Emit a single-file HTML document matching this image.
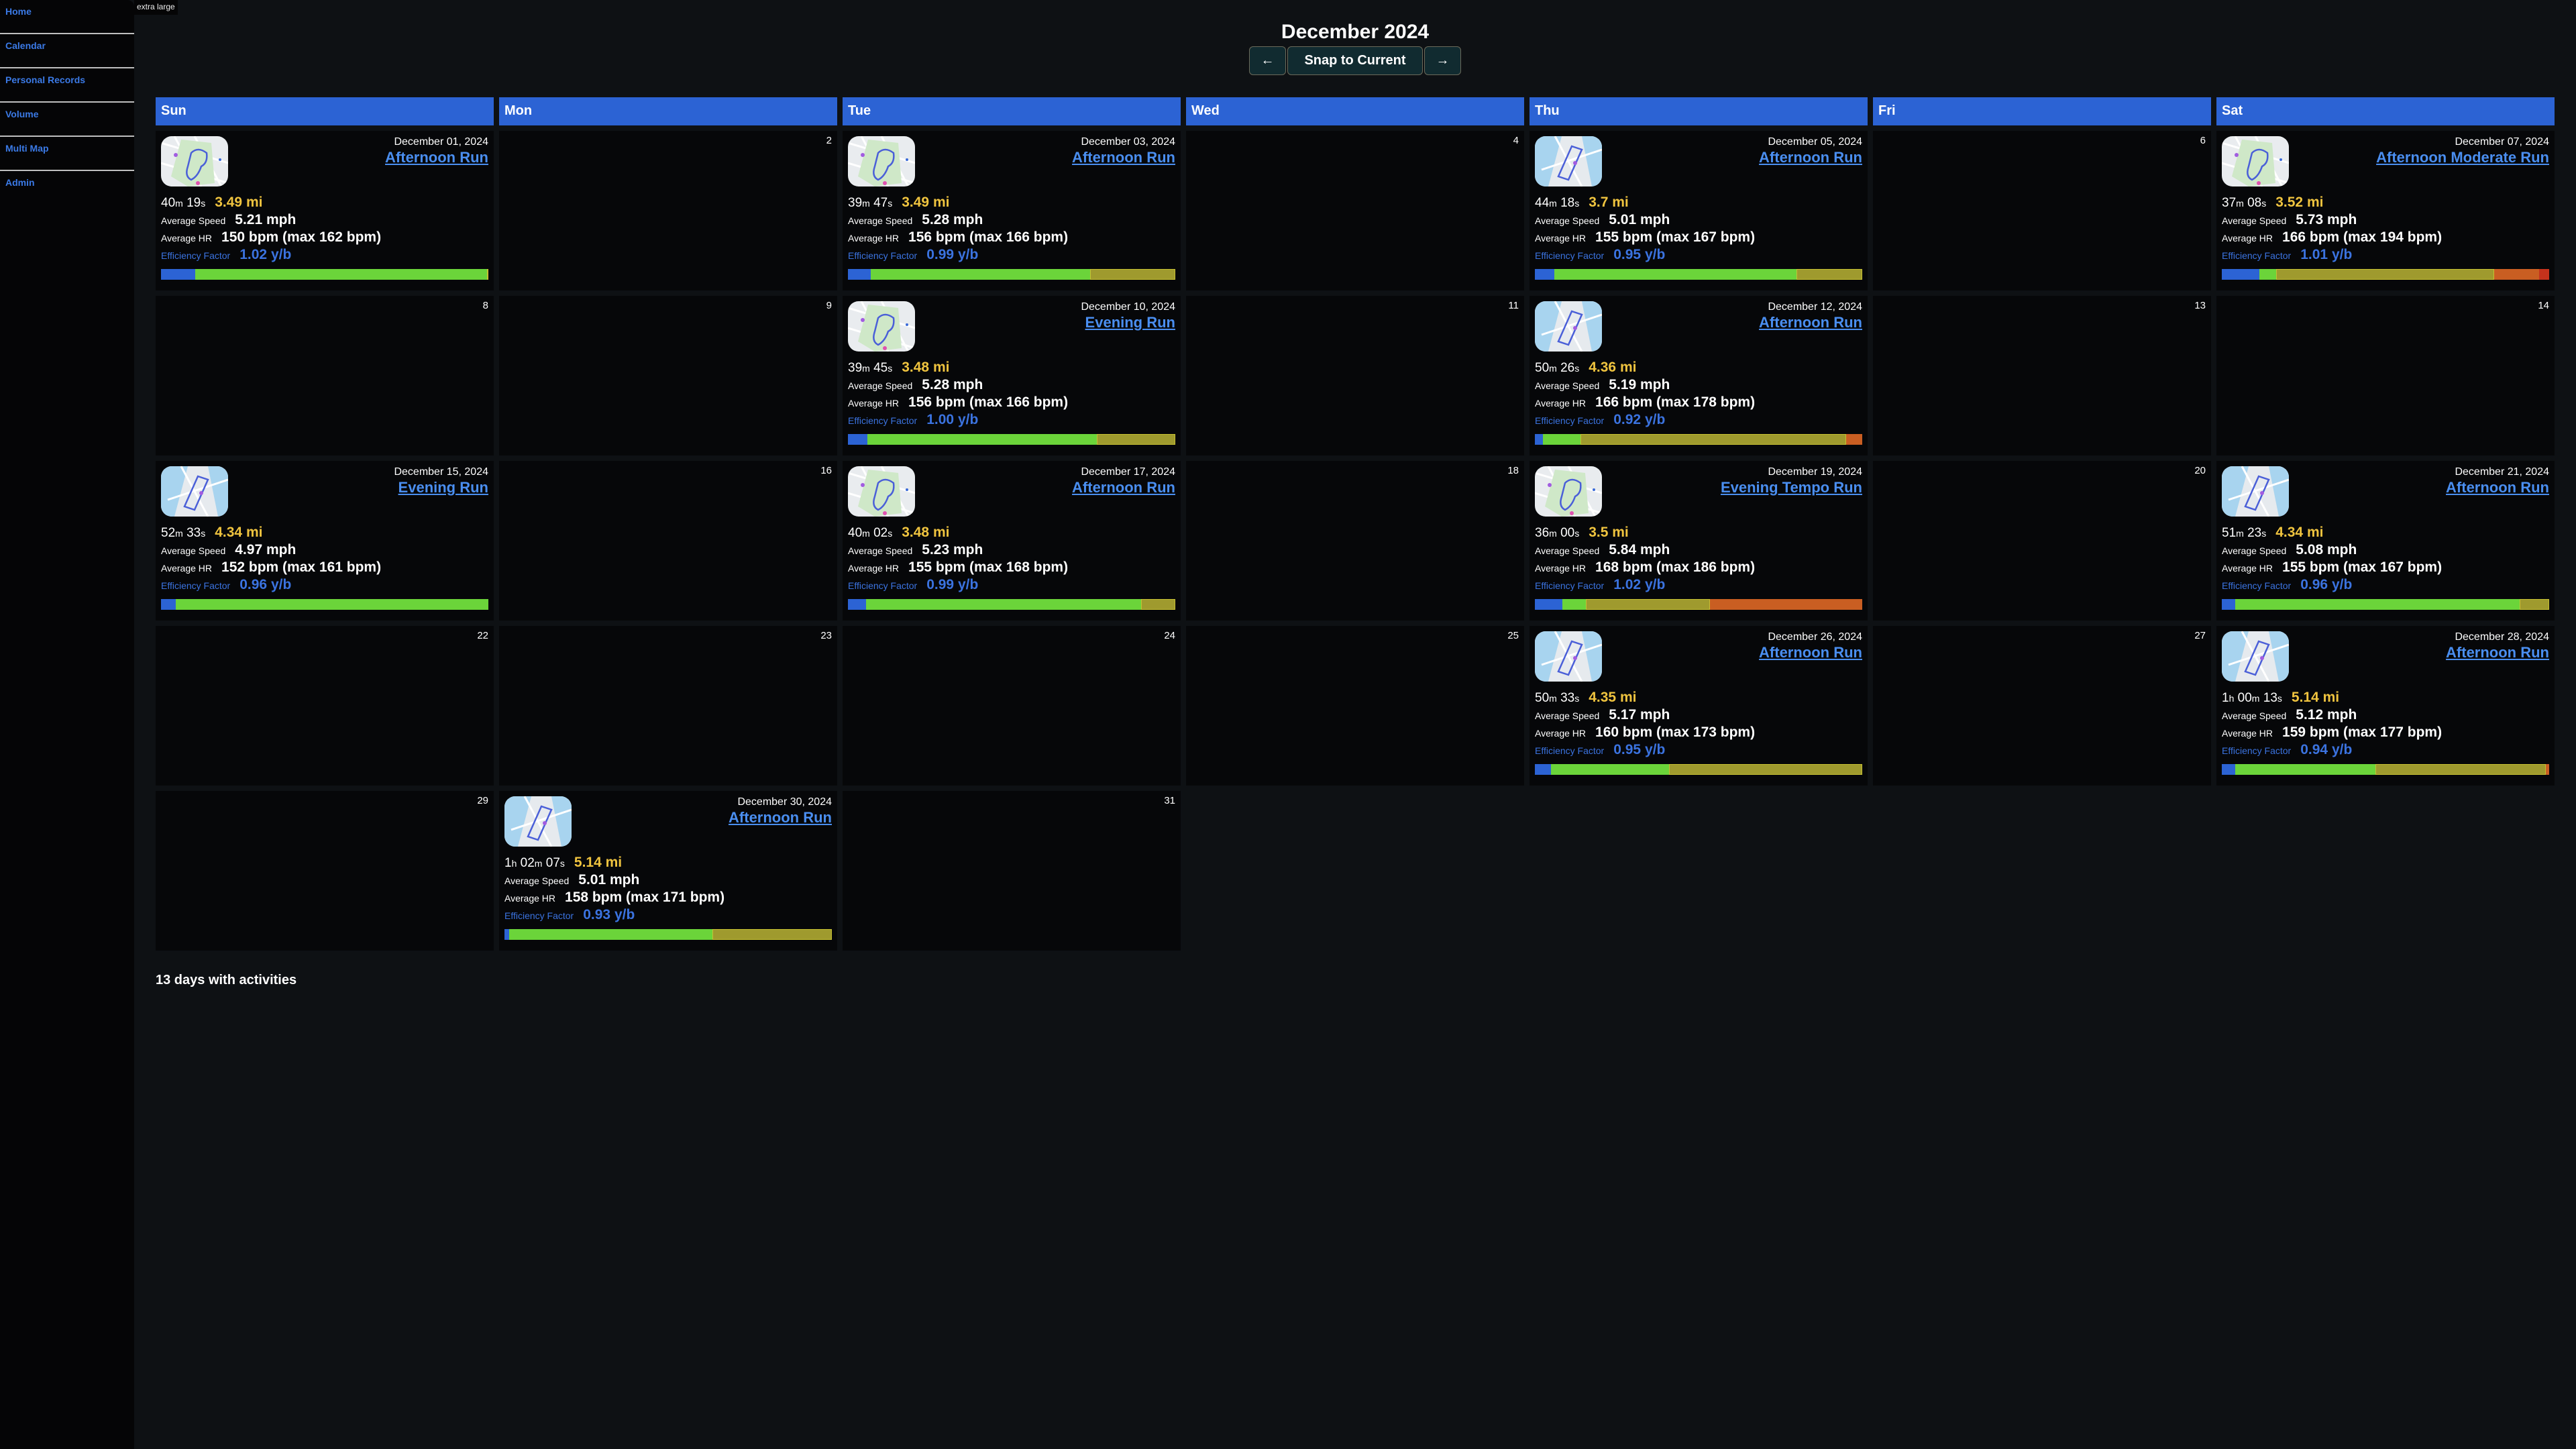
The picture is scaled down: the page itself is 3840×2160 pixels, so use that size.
<!DOCTYPE html>
<html><head><meta charset="utf-8"><style>
*{margin:0;padding:0;box-sizing:border-box}
body{width:3840px;height:2160px;background:#0e1114;font-family:"Liberation Sans",sans-serif;color:#fff;position:relative;overflow:hidden}
.sb{position:absolute;left:0;top:0;width:200px;height:2160px;background:#050506;border-top-right-radius:10px}
.sb div{height:51px;border-bottom:2px solid #bfbfbf;color:#3b7ae6;font-weight:bold;font-size:14px;padding:9px 0 0 8px}
.sb div:last-child{border:none}
.xl{position:absolute;left:200px;top:0;height:22px;padding:3px 4px;background:#050506;font-size:12px;color:#eee}
h1{position:absolute;left:200px;width:3640px;top:30px;text-align:center;font-size:30px;line-height:36px}
.btns{position:absolute;top:69px;left:1862px;display:flex;gap:2px}
.btns div{height:43px;background:#112b30;border:1px solid #6b6a5a;border-radius:6px;font-size:20px;font-weight:bold;line-height:41px;text-align:center}
.h{position:absolute;top:145px;width:504px;height:42px;background:#2c63d4;font-weight:bold;font-size:20px;padding:9px 8px}
.c{position:absolute;width:504px;height:238px;background:#060709}
.n{position:absolute;right:8px;top:6px;font-size:15px}
.m{position:absolute;left:8px;top:8px;width:100px;height:75px;border-radius:16px;overflow:hidden}
.d{position:absolute;right:8px;top:8px;font-size:16px}
.t{position:absolute;right:8px;top:27px;font-size:22px;font-weight:bold;color:#4a8ef0;text-decoration:underline}
.s{position:absolute;left:8px;top:94px;font-size:14px;white-space:nowrap}
.s div{height:26px;line-height:26px}
.s b{font-size:21px;margin-left:14px}
.l1{font-size:19px}.l1 small{font-size:14px}
.mi{color:#f0c43f}
.ef{color:#3b73e0}
.bar{position:absolute;left:8px;right:8px;top:206px;height:16px;display:flex}
.bar i{display:block;height:16px}
.B{background:#2c63d4}.G{background:#6bd43a}.O{background:#9f9a2e;box-shadow:inset 0 0 0 1px #c6c032}.R{background:#c95e22}.X{background:#c5321c}
.foot{position:absolute;left:232px;top:1450px;font-size:20px;font-weight:bold}
</style></head><body>
<svg width="0" height="0" style="position:absolute">
<symbol id="p" viewBox="0 0 100 75"><rect width="100" height="75" fill="#e9ecef"/><path d="M0 10L100 40M0 40L100 70M20 0L60 75M50 0L90 75" stroke="#fff" stroke-width="3"/><polygon points="30,5 75,10 80,70 40,75 15,60" fill="#cfe8c8"/><path d="M45 25 Q55 15 68 25 Q70 40 60 45 Q55 60 45 65 Q35 60 40 45 Z" fill="none" stroke="#4a5fd8" stroke-width="2.5"/><circle cx="22" cy="28" r="3" fill="#a25ce0"/><circle cx="55" cy="70" r="3" fill="#e052b0"/><circle cx="88" cy="35" r="2" fill="#3a6ad8"/></symbol>
<symbol id="w" viewBox="0 0 100 75"><rect width="100" height="75" fill="#e6eaee"/><path d="M0 0L40 0L20 75L0 75Z" fill="#a8d4ef"/><path d="M70 0L100 0L100 75L85 75Z" fill="#a8d4ef"/><path d="M10 50L100 20M30 0L70 75" stroke="#fff" stroke-width="3"/><path d="M35 60L55 15L70 20L50 65Z" fill="none" stroke="#4a5fd8" stroke-width="2.5"/><circle cx="60" cy="40" r="3" fill="#a25ce0"/></symbol>
</svg>
<div class="sb"><div>Home</div><div>Calendar</div><div>Personal Records</div><div>Volume</div><div>Multi Map</div><div>Admin</div></div>
<div class="xl">extra large</div>
<h1>December 2024</h1>
<div class="btns"><div style="width:55px">←</div><div style="width:202px">Snap to Current</div><div style="width:55px">→</div></div>
<div class="h" style="left:232px">Sun</div><div class="h" style="left:744px">Mon</div><div class="h" style="left:1256px">Tue</div><div class="h" style="left:1768px">Wed</div><div class="h" style="left:2280px">Thu</div><div class="h" style="left:2792px">Fri</div><div class="h" style="left:3304px">Sat</div>

<div class="c" style="left:232px;top:195px"><svg class="m"><use href="#p"/></svg><div class="d">December 01, 2024</div><a class="t">Afternoon Run</a><div class="s"><div class="l1">40<small>m</small> 19<small>s</small><b class="mi">3.49 mi</b></div><div>Average Speed<b>5.21 mph</b></div><div>Average HR<b>150 bpm (max 162 bpm)</b></div><div class="ef">Efficiency Factor<b>1.02 y/b</b></div></div><div class="bar"><i class="B" style="width:10.5%"></i><i class="G" style="width:89%"></i><i class="O" style="width:.5%"></i></div></div>
<div class="c" style="left:744px;top:195px"><div class="n">2</div></div>
<div class="c" style="left:1256px;top:195px"><svg class="m"><use href="#p"/></svg><div class="d">December 03, 2024</div><a class="t">Afternoon Run</a><div class="s"><div class="l1">39<small>m</small> 47<small>s</small><b class="mi">3.49 mi</b></div><div>Average Speed<b>5.28 mph</b></div><div>Average HR<b>156 bpm (max 166 bpm)</b></div><div class="ef">Efficiency Factor<b>0.99 y/b</b></div></div><div class="bar"><i class="B" style="width:7%"></i><i class="G" style="width:67%"></i><i class="O" style="width:26%"></i></div></div>
<div class="c" style="left:1768px;top:195px"><div class="n">4</div></div>
<div class="c" style="left:2280px;top:195px"><svg class="m"><use href="#w"/></svg><div class="d">December 05, 2024</div><a class="t">Afternoon Run</a><div class="s"><div class="l1">44<small>m</small> 18<small>s</small><b class="mi">3.7 mi</b></div><div>Average Speed<b>5.01 mph</b></div><div>Average HR<b>155 bpm (max 167 bpm)</b></div><div class="ef">Efficiency Factor<b>0.95 y/b</b></div></div><div class="bar"><i class="B" style="width:6%"></i><i class="G" style="width:74%"></i><i class="O" style="width:20%"></i></div></div>
<div class="c" style="left:2792px;top:195px"><div class="n">6</div></div>
<div class="c" style="left:3304px;top:195px"><svg class="m"><use href="#p"/></svg><div class="d">December 07, 2024</div><a class="t">Afternoon Moderate Run</a><div class="s"><div class="l1">37<small>m</small> 08<small>s</small><b class="mi">3.52 mi</b></div><div>Average Speed<b>5.73 mph</b></div><div>Average HR<b>166 bpm (max 194 bpm)</b></div><div class="ef">Efficiency Factor<b>1.01 y/b</b></div></div><div class="bar"><i class="B" style="width:11.4%"></i><i class="G" style="width:5.3%"></i><i class="O" style="width:66.5%"></i><i class="R" style="width:13.8%"></i><i class="X" style="width:3%"></i></div></div>

<div class="c" style="left:232px;top:441px"><div class="n">8</div></div>
<div class="c" style="left:744px;top:441px"><div class="n">9</div></div>
<div class="c" style="left:1256px;top:441px"><svg class="m"><use href="#p"/></svg><div class="d">December 10, 2024</div><a class="t">Evening Run</a><div class="s"><div class="l1">39<small>m</small> 45<small>s</small><b class="mi">3.48 mi</b></div><div>Average Speed<b>5.28 mph</b></div><div>Average HR<b>156 bpm (max 166 bpm)</b></div><div class="ef">Efficiency Factor<b>1.00 y/b</b></div></div><div class="bar"><i class="B" style="width:6%"></i><i class="G" style="width:70%"></i><i class="O" style="width:24%"></i></div></div>
<div class="c" style="left:1768px;top:441px"><div class="n">11</div></div>
<div class="c" style="left:2280px;top:441px"><svg class="m"><use href="#w"/></svg><div class="d">December 12, 2024</div><a class="t">Afternoon Run</a><div class="s"><div class="l1">50<small>m</small> 26<small>s</small><b class="mi">4.36 mi</b></div><div>Average Speed<b>5.19 mph</b></div><div>Average HR<b>166 bpm (max 178 bpm)</b></div><div class="ef">Efficiency Factor<b>0.92 y/b</b></div></div><div class="bar"><i class="B" style="width:2.5%"></i><i class="G" style="width:11.5%"></i><i class="O" style="width:81%"></i><i class="R" style="width:5%"></i></div></div>
<div class="c" style="left:2792px;top:441px"><div class="n">13</div></div>
<div class="c" style="left:3304px;top:441px"><div class="n">14</div></div>

<div class="c" style="left:232px;top:687px"><svg class="m"><use href="#w"/></svg><div class="d">December 15, 2024</div><a class="t">Evening Run</a><div class="s"><div class="l1">52<small>m</small> 33<small>s</small><b class="mi">4.34 mi</b></div><div>Average Speed<b>4.97 mph</b></div><div>Average HR<b>152 bpm (max 161 bpm)</b></div><div class="ef">Efficiency Factor<b>0.96 y/b</b></div></div><div class="bar"><i class="B" style="width:4.5%"></i><i class="G" style="width:95.5%"></i></div></div>
<div class="c" style="left:744px;top:687px"><div class="n">16</div></div>
<div class="c" style="left:1256px;top:687px"><svg class="m"><use href="#p"/></svg><div class="d">December 17, 2024</div><a class="t">Afternoon Run</a><div class="s"><div class="l1">40<small>m</small> 02<small>s</small><b class="mi">3.48 mi</b></div><div>Average Speed<b>5.23 mph</b></div><div>Average HR<b>155 bpm (max 168 bpm)</b></div><div class="ef">Efficiency Factor<b>0.99 y/b</b></div></div><div class="bar"><i class="B" style="width:5.5%"></i><i class="G" style="width:84%"></i><i class="O" style="width:10.5%"></i></div></div>
<div class="c" style="left:1768px;top:687px"><div class="n">18</div></div>
<div class="c" style="left:2280px;top:687px"><svg class="m"><use href="#p"/></svg><div class="d">December 19, 2024</div><a class="t">Evening Tempo Run</a><div class="s"><div class="l1">36<small>m</small> 00<small>s</small><b class="mi">3.5 mi</b></div><div>Average Speed<b>5.84 mph</b></div><div>Average HR<b>168 bpm (max 186 bpm)</b></div><div class="ef">Efficiency Factor<b>1.02 y/b</b></div></div><div class="bar"><i class="B" style="width:8.5%"></i><i class="G" style="width:7.1%"></i><i class="O" style="width:37.8%"></i><i class="R" style="width:46.6%"></i></div></div>
<div class="c" style="left:2792px;top:687px"><div class="n">20</div></div>
<div class="c" style="left:3304px;top:687px"><svg class="m"><use href="#w"/></svg><div class="d">December 21, 2024</div><a class="t">Afternoon Run</a><div class="s"><div class="l1">51<small>m</small> 23<small>s</small><b class="mi">4.34 mi</b></div><div>Average Speed<b>5.08 mph</b></div><div>Average HR<b>155 bpm (max 167 bpm)</b></div><div class="ef">Efficiency Factor<b>0.96 y/b</b></div></div><div class="bar"><i class="B" style="width:4%"></i><i class="G" style="width:87%"></i><i class="O" style="width:9%"></i></div></div>

<div class="c" style="left:232px;top:933px"><div class="n">22</div></div>
<div class="c" style="left:744px;top:933px"><div class="n">23</div></div>
<div class="c" style="left:1256px;top:933px"><div class="n">24</div></div>
<div class="c" style="left:1768px;top:933px"><div class="n">25</div></div>
<div class="c" style="left:2280px;top:933px"><svg class="m"><use href="#w"/></svg><div class="d">December 26, 2024</div><a class="t">Afternoon Run</a><div class="s"><div class="l1">50<small>m</small> 33<small>s</small><b class="mi">4.35 mi</b></div><div>Average Speed<b>5.17 mph</b></div><div>Average HR<b>160 bpm (max 173 bpm)</b></div><div class="ef">Efficiency Factor<b>0.95 y/b</b></div></div><div class="bar"><i class="B" style="width:5%"></i><i class="G" style="width:36%"></i><i class="O" style="width:59%"></i></div></div>
<div class="c" style="left:2792px;top:933px"><div class="n">27</div></div>
<div class="c" style="left:3304px;top:933px"><svg class="m"><use href="#w"/></svg><div class="d">December 28, 2024</div><a class="t">Afternoon Run</a><div class="s"><div class="l1">1<small>h</small> 00<small>m</small> 13<small>s</small><b class="mi">5.14 mi</b></div><div>Average Speed<b>5.12 mph</b></div><div>Average HR<b>159 bpm (max 177 bpm)</b></div><div class="ef">Efficiency Factor<b>0.94 y/b</b></div></div><div class="bar"><i class="B" style="width:4%"></i><i class="G" style="width:43%"></i><i class="O" style="width:52%"></i><i class="R" style="width:1%"></i></div></div>

<div class="c" style="left:232px;top:1179px"><div class="n">29</div></div>
<div class="c" style="left:744px;top:1179px"><svg class="m"><use href="#w"/></svg><div class="d">December 30, 2024</div><a class="t">Afternoon Run</a><div class="s"><div class="l1">1<small>h</small> 02<small>m</small> 07<small>s</small><b class="mi">5.14 mi</b></div><div>Average Speed<b>5.01 mph</b></div><div>Average HR<b>158 bpm (max 171 bpm)</b></div><div class="ef">Efficiency Factor<b>0.93 y/b</b></div></div><div class="bar"><i class="B" style="width:1.5%"></i><i class="G" style="width:62%"></i><i class="O" style="width:36.5%"></i></div></div>
<div class="c" style="left:1256px;top:1179px"><div class="n">31</div></div>

<div class="foot">13 days with activities</div>
</body></html>
